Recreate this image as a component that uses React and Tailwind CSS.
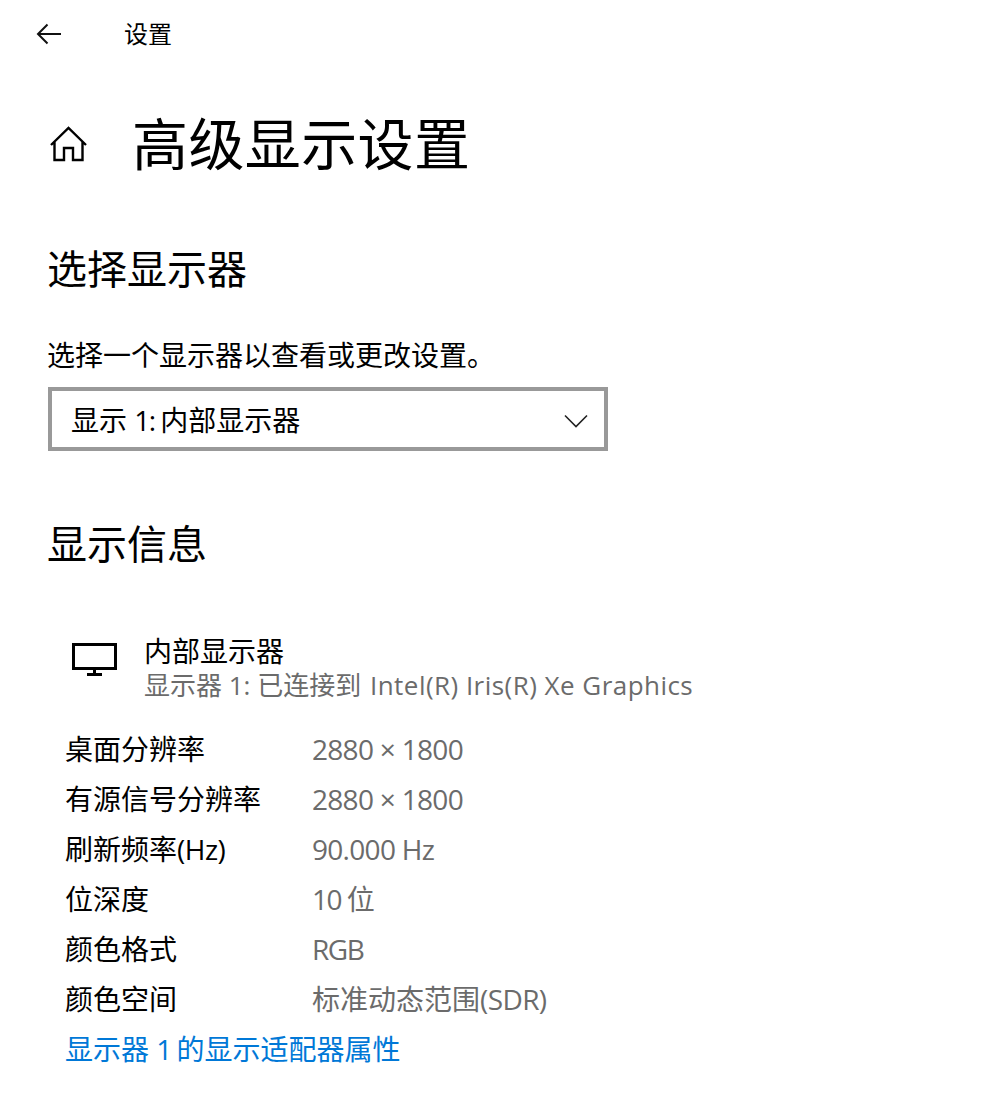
const FONT = "font-['Open_Sans','Noto_Sans_CJK_SC',sans-serif]";

const rows = [
  ['桌面分辨率', <span className="tracking-[-0.7px]">2880 × 1800</span>],
  ['有源信号分辨率', <span className="tracking-[-0.7px]">2880 × 1800</span>],
  [<>刷新频率<span className="tracking-[-0.5px]">(Hz)</span></>, <span className="tracking-[-0.7px]">90.000 Hz</span>],
  ['位深度', <><span className="tracking-[-1.5px]">10 </span>位</>],
  ['颜色格式', <span className="tracking-[-1.5px]">RGB</span>],
  ['颜色空间', <>标准动态范围<span className="tracking-[-0.6px]">(SDR)</span></>],
];

const App = () => {
  return (
    <div className={`${FONT} w-[1000px] h-[1104px] bg-white text-black overflow-hidden`}>
      <header className="flex items-center h-[68px] pl-[36px]">
        <svg width="25" height="22" viewBox="0 0 25 22" fill="none" stroke="#111" strokeWidth="2">
          <path d="M25 11H2M11.5 1.5 2 11l9.5 9.5" />
        </svg>
        <span className="ml-[63px] text-[24px] leading-[32px]">设置</span>
      </header>

      <div className="flex items-center mt-[8px] h-[136px] pl-[50px]">
        <svg width="37" height="36" viewBox="0 0 37 36" fill="none" stroke="#000" strokeWidth="2.4">
          <path d="M1 19 18.500 2 36 19M4.500 15.500V34H14V22H23V34H32.500V15.500" />
        </svg>
        <h1 className="ml-[45px] text-[56px] leading-[76px] font-normal tracking-[0.4px] -translate-y-[1px]">高级显示设置</h1>
      </div>

      <main className="pl-[47px]">
        <h2 className="mt-[30px] text-[40px] leading-[54px] font-normal">选择显示器</h2>
        <p className="mt-[40px] text-[28px] leading-[38px]">选择一个显示器以查看或更改设置。</p>
        <div className="mt-[13px] ml-[1px] flex items-center justify-between w-[560px] h-[64px] border-[4px] border-[#999999] pl-[19px] pr-[16px]">
          <span className="mt-[1px] text-[28px] leading-[38px]">显示 <span className="tracking-[-1.6px]">1: </span>内部显示器</span>
          <svg className="mt-[3px]" width="24" height="14" viewBox="0 0 24 14" fill="none" stroke="#222" strokeWidth="1.600">
            <path d="M1 1.500 12 12.500 23 1.500" />
          </svg>
        </div>

        <h2 className="mt-[66px] text-[40px] leading-[54px] font-normal">显示信息</h2>

        <div className="mt-[63px] flex items-start pl-[25px]">
          <svg className="mt-[9px]" width="46" height="33" viewBox="0 0 46 33" fill="none" stroke="#000" strokeWidth="3">
            <path d="M1.500 1.500H43.500V25.500H1.500ZM22.500 25.500V31M15 31.500H30" />
          </svg>
          <div className="ml-[26px]">
            <div className="text-[28px] leading-[34px]">内部显示器</div>
            <div className="text-[26px] leading-[34px] text-[#6b6b6b] whitespace-nowrap">
              显示器 1: 已连接到 <span className="ml-[2px] tracking-[0.46px]">Intel(R) Iris(R) Xe Graphics</span>
            </div>
          </div>
        </div>

        <div className="mt-[22px] pl-[18px]">
          {rows.map(([label, value], idx) => (
            <div key={idx} className="flex h-[50px] items-center text-[28px]">
              <span className="w-[247px] whitespace-nowrap">{label}</span>
              <span className="text-[#6b6b6b] whitespace-nowrap">{value}</span>
            </div>
          ))}
          <a className="flex h-[50px] items-center text-[28px] text-[#0078d7] whitespace-pre">显示器 <span className="tracking-[-1.5px]">1 </span>的显示适配器属性</a>
        </div>
      </main>
    </div>
  );
};

export default App;
